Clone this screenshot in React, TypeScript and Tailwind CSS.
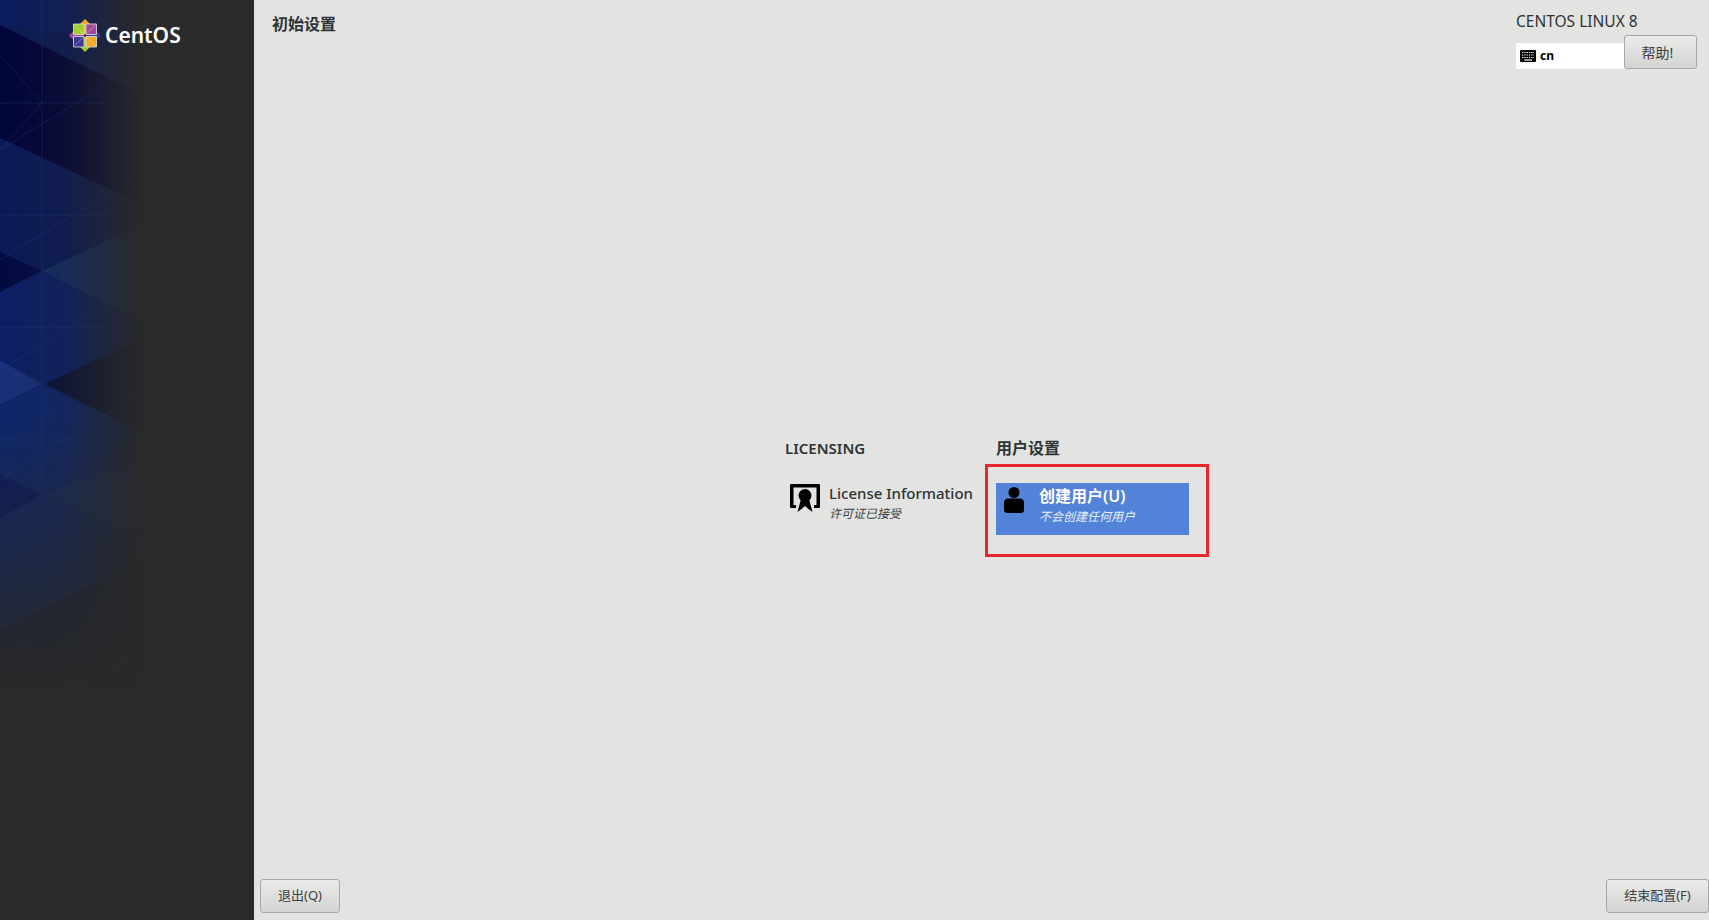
const font = { fontFamily: '"Noto Sans", "Noto Sans CJK SC", sans-serif' };

function SidebarArt() {
  return (
    <svg className="absolute left-0 top-0" width="254" height="920" viewBox="0 0 254 920">
      <defs>
        <linearGradient id="fadeX" x1="0" x2="1" y1="0" y2="0">
          <stop offset="0" stopColor="white" stopOpacity="1" />
          <stop offset="0.25" stopColor="white" stopOpacity="0.8" />
          <stop offset="0.56" stopColor="white" stopOpacity="0" />
        </linearGradient>
        <linearGradient id="fadeY" x1="0" x2="0" y1="0" y2="1">
          <stop offset="0" stopColor="white" stopOpacity="1" />
          <stop offset="0.45" stopColor="white" stopOpacity="1" />
          <stop offset="0.75" stopColor="white" stopOpacity="0" />
        </linearGradient>
        <mask id="fadeXMask">
          <rect width="254" height="920" fill="url(#fadeX)" />
        </mask>
        <mask id="fadeYMask">
          <rect width="254" height="920" fill="url(#fadeY)" />
        </mask>
      </defs>
      <g mask="url(#fadeXMask)">
        <g mask="url(#fadeYMask)">
          <rect width="254" height="920" fill="#0c1b55" />
          <polygon points="0,0 254,0 254,60 0,25" fill="#0c1d5e" />
          <polygon points="0,25 145,96 145,206 0,138" fill="#02053a" />
          <polygon points="0,138 145,206 145,325 42,271 0,252" fill="#0b1a58" />
          <polygon points="0,252 42,271 0,292" fill="#030a42" />
          <polygon points="42,271 145,223 145,325" fill="#142c66" />
          <polygon points="0,292 42,271 145,325 145,337 45,384 0,361" fill="#0c1f66" />
          <polygon points="45,384 145,337 145,435" fill="#0b1238" />
          <polygon points="0,361 42,384 0,405" fill="#1a307c" />
          <polygon points="0,405 42,384 145,435 145,530 42,495 0,475" fill="#0e266c" />
          <polygon points="0,475 42,495 0,518" fill="#0b1a60" />
          <polygon points="42,495 145,455 145,540" fill="#132b66" />
          <polygon points="0,518 42,495 145,540 145,560 0,630" fill="#0f276c" />
          <polygon points="0,630 145,560 145,760 0,760" fill="#0d1b48" />
          <path
            d="M0 103H145M0 215H145M0 327H145M0 440H145M0 552H145M42 0V760M0 150L145 60M0 260L145 170M0 370L145 280M0 480L145 390M0 590L145 500M0 55L42 103L0 150M0 361L145 435"
            stroke="#2a4a9c"
            strokeOpacity="0.3"
            fill="none"
          />
        </g>
      </g>
    </svg>
  );
}

function CentosLogo() {
  return (
    <svg width="32" height="33" viewBox="0 0 32 33" className="shrink-0">
      <polygon points="16,0 21,5 21,12 16,16.5 11,12 11,5" fill="#efa724" />
      <polygon points="32,16.5 27,21.5 20,21.5 16,16.5 20,11.5 27,11.5" fill="#3d3a94" />
      <polygon points="16,33 11,28 11,21 16,16.5 21,21 21,28" fill="#9ccd2a" />
      <polygon points="0,16.5 5,11.5 12,11.5 16,16.5 12,21.5 5,21.5" fill="#a0479a" />
      <polygon points="4.5,5 15,5 15,15.5 4.5,15.5" fill="#9ccd2a" stroke="#dfe3ea" strokeWidth="0.8" />
      <polygon points="17,5 27.5,5 27.5,15.5 17,15.5" fill="#a0479a" stroke="#dfe3ea" strokeWidth="0.8" />
      <polygon points="4.5,17.5 15,17.5 15,28 4.5,28" fill="#3d3a94" stroke="#dfe3ea" strokeWidth="0.8" />
      <polygon points="17,17.5 27.5,17.5 27.5,28 17,28" fill="#efa724" stroke="#dfe3ea" strokeWidth="0.8" />
      <path
        d="M6 6.5L14 14.5M26 6.5L18 14.5M6 26.5L14 18.5M26 26.5L18 18.5"
        stroke="white"
        strokeOpacity="0.55"
        strokeWidth="0.7"
        fill="none"
      />
      <polygon points="15,15.5 17,15.5 17,17.5 15,17.5" fill="#1a1a2a" />
    </svg>
  );
}

function LicenseIcon() {
  return (
    <svg width="32" height="30" viewBox="0 0 32 30" fill="black">
      <path d="M2 1H30Q31 1 31 2V24Q31 25 30 25H25V22H27.5V4.5H4.5V22H7V25H2Q1 25 1 24V2Q1 1 2 1Z" />
      <circle cx="16" cy="12.5" r="6.5" />
      <polygon points="12,16 20,16 23.5,29 19.5,26 16,23 12.5,26 8.5,29" />
    </svg>
  );
}

function UserIcon() {
  return (
    <svg width="20" height="26" viewBox="0 0 20 26" fill="black">
      <circle cx="10" cy="5.5" r="5.5" />
      <path d="M4 11.5H16C18.5 11.5 20 13.5 20 15.5V23C20 25 19 26 17 26H3C1 26 0 25 0 23V15.5C0 13.5 1.5 11.5 4 11.5Z" />
    </svg>
  );
}

function KeyboardIcon() {
  return (
    <svg width="16" height="12" viewBox="0 0 16 12">
      <rect width="16" height="12" rx="1" fill="black" />
      <path
        d="M2 2.5H14M2 5H14M2 7.5H14"
        stroke="white"
        strokeWidth="1.2"
        strokeDasharray="1.3 1"
        fill="none"
      />
      <path d="M4 10H12" stroke="white" strokeWidth="1.2" />
    </svg>
  );
}

function ActionButton({ label, className }: { label: string; className: string }) {
  return (
    <button
      className={
        "h-[34px] rounded-[3px] border border-[#a8a8a6] bg-gradient-to-b from-[#ebebe9] to-[#d3d3d1] text-[#3c4042] " +
        className
      }
    >
      {label}
    </button>
  );
}

export default function App() {
  return (
    <div className="flex h-[920px] w-[1709px] overflow-hidden bg-[#e3e3e1]" style={font}>
      <aside className="relative w-[254px] shrink-0 bg-[#2a2a2a]">
        <SidebarArt />
        <div className="relative flex items-center pl-[69px] pt-[19px]">
          <CentosLogo />
          <span className="ml-[4px] text-[21px] font-semibold leading-[33px] text-white">CentOS</span>
        </div>
      </aside>

      <main className="flex min-w-0 flex-1 flex-col">
        <header className="flex h-[70px] justify-between">
          <h1 className="pl-[18px] pt-[13px] text-[16px] font-bold leading-[22px] text-[#2e3436]">
            初始设置
          </h1>
          <div className="w-[193px] pr-[12px] pt-[10px]">
            <div className="text-[15.5px] leading-[22px] text-[#2e3436]">CENTOS LINUX 8</div>
            <div className="mt-[11px] flex items-end">
              <div className="flex h-[26px] w-[108px] items-center gap-[4px] bg-white pl-[4px] text-[12px] font-bold text-black">
                <KeyboardIcon />
                cn
              </div>
              <ActionButton label="帮助!" className="-mt-[8px] w-[73px] pr-[6px] text-[14px]" />
            </div>
          </div>
        </header>

        <section className="flex flex-1 pl-[531px] pt-[367px]">
          <div className="w-[211px]">
            <h2 className="text-[15px] font-semibold leading-[22px] text-[#2e3436]">LICENSING</h2>
            <div className="mt-[24px] flex pl-[4px]">
              <LicenseIcon />
              <div className="ml-[8px]">
                <div className="text-[15px] font-medium leading-[20px] text-[#2e3436]">
                  License Information
                </div>
                <div className="mt-[2px] text-[12px] italic leading-[18px] text-[#3c4042]">许可证已接受</div>
              </div>
            </div>
          </div>
          <div>
            <h2 className="text-[16px] font-bold leading-[22px] text-[#2e3436]">用户设置</h2>
            <div className="relative mt-[24px] flex h-[52px] w-[193px] bg-[#5283d8] pl-[8px] pt-[3px] text-white">
              <div className="pt-[1px]">
                <UserIcon />
              </div>
              <div className="ml-[15px]">
                <div className="text-[16px] font-semibold leading-[20px]">创建用户(U)</div>
                <div className="mt-[2px] text-[12px] italic leading-[18px] text-[#e8eefa]">不会创建任何用户</div>
              </div>
              <div className="absolute -left-[11px] -top-[19px] h-[93px] w-[224px] border-[3px] border-[#e8262f]" />
            </div>
          </div>
        </section>

        <footer className="flex h-[41px] items-start justify-between pl-[6px]">
          <ActionButton label="退出(Q)" className="w-[80px] text-[13px]" />
          <ActionButton label="结束配置(F)" className="w-[103px] text-[13px]" />
        </footer>
      </main>
    </div>
  );
}
